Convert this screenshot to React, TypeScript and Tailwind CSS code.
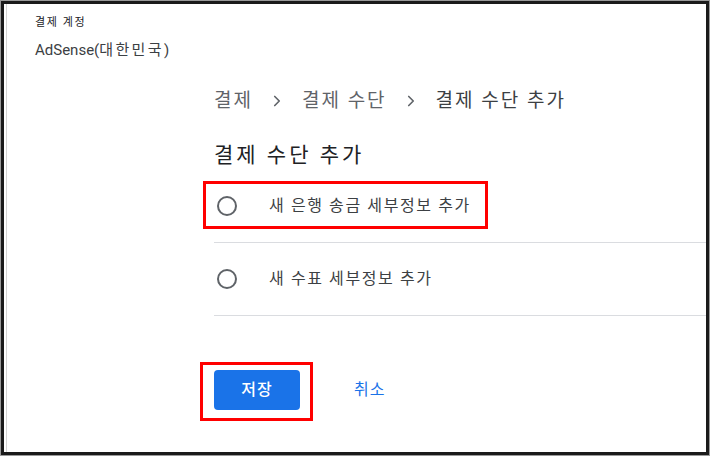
import { ChevronRight } from 'lucide-react';

const font = { fontFamily: 'Roboto, "Noto Sans CJK KR", sans-serif' };

function Radio() {
  return <span className="block w-5 h-5 rounded-full border-2 border-[#5f6368] shrink-0" />;
}

function OptionRow({ label, highlight }: { label: string; highlight?: boolean }) {
  return (
    <div className="relative h-[73px] flex items-center border-b border-[#dadce0]">
      {highlight && (
        <div className="absolute left-[-11px] top-[11px] w-[285px] h-[48px] border-[3px] border-[#ff0000]" />
      )}
      <div className="ml-[3px]">
        <Radio />
      </div>
      <span className="ml-[32px] text-[16px] text-[#3c4043] tracking-[1.6px]">{label}</span>
    </div>
  );
}

export default function App() {
  return (
    <div className="w-[710px] h-[456px] bg-[#9a9a9a] p-[1px]" style={font}>
      <div className="w-full h-full border-[3px] border-[#1b1b1b] bg-white overflow-hidden">
        <div className="h-full ml-[2px] border-l border-[#d4d4d4] flex flex-col">
          {/* 계정 헤더 */}
          <div className="pl-[28px] pt-[11px]">
            <div className="text-[11px] leading-[16px] text-[#202124] tracking-[1.6px]">결제 계정</div>
            <div className="mt-[9px] text-[15px] leading-[20px] text-[#3c4043]">
              AdSense(<span className="tracking-[2.4px]">대한민국</span>)
            </div>
          </div>

          <div className="pl-[207px] pt-[27px]">
            {/* 브레드크럼 */}
            <div className="flex items-center h-[28px] text-[19px] text-[#5f6368] tracking-[2px]">
              <span>결제</span>
              <ChevronRight className="w-[18px] h-[18px] ml-[15px] mr-[16px]" strokeWidth={2.2} />
              <span>결제 수단</span>
              <ChevronRight className="w-[18px] h-[18px] ml-[15px] mr-[16px]" strokeWidth={2.2} />
              <span className="text-[#3c4043]">결제 수단 추가</span>
            </div>

            <div className="mt-[25px] text-[21px] leading-[30px] text-[#202124] tracking-[3px]">결제 수단 추가</div>

            <div>
              <OptionRow label="새 은행 송금 세부정보 추가" highlight />
              <OptionRow label="새 수표 세부정보 추가" />
            </div>

            {/* 버튼 */}
            <div className="flex items-center mt-[54px]">
              <div className="relative">
                <div className="absolute left-[-14px] top-[-8px] w-[113px] h-[59px] border-[3px] border-[#ff0000]" />
                <button className="w-[86px] h-[40px] rounded-[4px] bg-[#1a73e8] text-white text-[16px] font-medium tracking-[1px]">
                  저장
                </button>
              </div>
              <button className="ml-[54px] text-[16px] text-[#1a73e8] tracking-[1px]">취소</button>
            </div>
          </div>
        </div>
      </div>
    </div>
  );
}
